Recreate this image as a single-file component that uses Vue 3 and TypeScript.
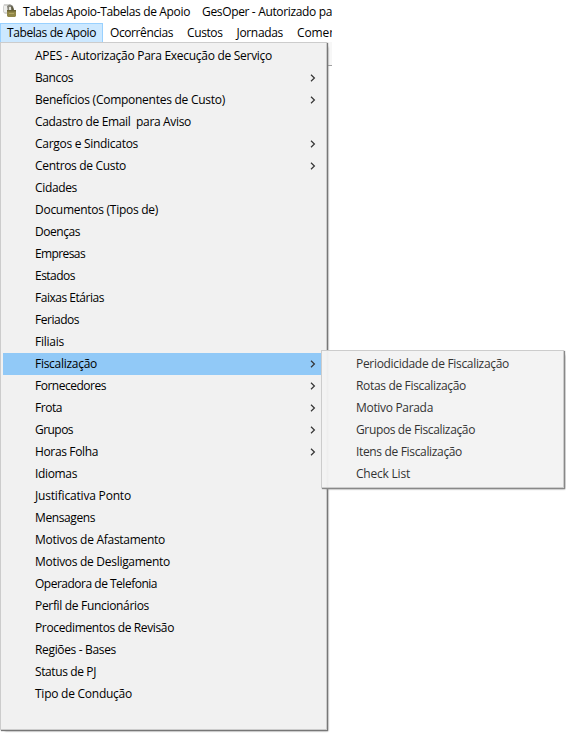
<script setup lang="ts">
import { nextTick, onMounted, ref } from 'vue'

interface Entry {
  label: string
  width: number
  sub?: boolean
  active?: boolean
}

const title: Entry[] = [
  { label: 'Tabelas Apoio-Tabelas de Apoio', width: 167 },
  { label: 'GesOper - Autorizado pa', width: 130 },
]

const bar: Entry[] = [
  { label: 'Tabelas de Apoio', width: 89, active: true },
  { label: 'Ocorrências', width: 63 },
  { label: 'Custos', width: 35.5 },
  { label: 'Jornadas', width: 46.5 },
  { label: 'Comer', width: 37 },
]

const items: Entry[] = [
  { label: 'APES - Autorização Para Execução de Serviço', width: 237 },
  { label: 'Bancos', width: 38, sub: true },
  { label: 'Benefícios (Componentes de Custo)', width: 190, sub: true },
  { label: 'Cadastro de Email  para Aviso', width: 156 },
  { label: 'Cargos e Sindicatos', width: 103, sub: true },
  { label: 'Centros de Custo', width: 91, sub: true },
  { label: 'Cidades', width: 42 },
  { label: 'Documentos (Tipos de)', width: 123 },
  { label: 'Doenças', width: 45 },
  { label: 'Empresas', width: 50 },
  { label: 'Estados', width: 40 },
  { label: 'Faixas Etárias', width: 69 },
  { label: 'Feriados', width: 44 },
  { label: 'Filiais', width: 29 },
  { label: 'Fiscalização', width: 62, sub: true, active: true },
  { label: 'Fornecedores', width: 71, sub: true },
  { label: 'Frota', width: 27, sub: true },
  { label: 'Grupos', width: 38, sub: true },
  { label: 'Horas Folha', width: 63, sub: true },
  { label: 'Idiomas', width: 42 },
  { label: 'Justificativa Ponto', width: 96 },
  { label: 'Mensagens', width: 60 },
  { label: 'Motivos de Afastamento', width: 130 },
  { label: 'Motivos de Desligamento', width: 135 },
  { label: 'Operadora de Telefonia', width: 122 },
  { label: 'Perfil de Funcionários', width: 114 },
  { label: 'Procedimentos de Revisão', width: 139 },
  { label: 'Regiões - Bases', width: 81 },
  { label: 'Status de PJ', width: 61 },
  { label: 'Tipo de Condução', width: 97 },
]

const subItems: Entry[] = [
  { label: 'Periodicidade de Fiscalização', width: 153 },
  { label: 'Rotas de Fiscalização', width: 110 },
  { label: 'Motivo Parada', width: 77 },
  { label: 'Grupos de Fiscalização', width: 119 },
  { label: 'Itens de Fiscalização', width: 106 },
  { label: 'Check List', width: 54 },
]

// Tracking that makes each label fill its nominal width.
const spacing = ref<Record<string, string>>({})
const root = ref<HTMLElement | null>(null)

onMounted(async () => {
  await nextTick()
  const widths = new Map([...title, ...bar, ...items, ...subItems].map((e) => [e.label, e.width]))
  const next: Record<string, string> = {}
  root.value?.querySelectorAll<HTMLElement>('.label').forEach((el) => {
    const text = el.textContent ?? ''
    const wanted = widths.get(text)
    if (wanted) {
      next[text] = `${(wanted - el.getBoundingClientRect().width) / text.length}px`
    }
  })
  spacing.value = next
})
</script>

<template>
  <div ref="root" class="screen">
    <div class="window">
      <header class="titlebar">
        <svg class="app-icon" viewBox="0 0 16 16" width="16" height="16">
          <path d="M1 4 2 1h6l2 2v8H3L1 9z" fill="#d2d2d0" />
          <path d="M2 3h3v6H2z" fill="#eeeeec" />
          <path d="M5 3q3-3 6 0l1 5H6z" fill="#85847a" />
          <path d="M7 4h2v4H7z" fill="#e2e1d6" />
          <path d="M9 3q3 1 3 5h-2z" fill="#5f5b40" />
          <path d="M5 7h9v6l-1 1H6l-1-1z" fill="#918748" />
          <path d="M5 7h9v1.500H5z" fill="#6a6233" />
          <path d="M7 10h5v1H7z" fill="#b2a764" />
        </svg>
        <span v-for="t in title" :key="t.label" class="label" :style="{ letterSpacing: spacing[t.label] }">{{ t.label }}</span>
      </header>
      <nav class="menubar">
        <div v-for="b in bar" :key="b.label" class="tab" :class="{ active: b.active }">
          <span class="label" :style="{ letterSpacing: spacing[b.label] }">{{ b.label }}</span>
        </div>
      </nav>
      <div class="toolbar-edge"></div>
    </div>

    <ul class="menu main">
      <li v-for="i in items" :key="i.label" class="row" :class="{ active: i.active }">
        <span class="label" :style="{ letterSpacing: spacing[i.label] }">{{ i.label }}</span>
        <svg v-if="i.sub" class="chevron" viewBox="0 0 6 8" width="6" height="8">
          <path d="M1 .7 4.400 4 1 7.300" fill="none" stroke="#333" stroke-width="1.2" />
        </svg>
      </li>
    </ul>

    <ul class="menu flyout">
      <li v-for="s in subItems" :key="s.label" class="row">
        <span class="label" :style="{ letterSpacing: spacing[s.label] }">{{ s.label }}</span>
      </li>
    </ul>
  </div>
</template>

<style>
body {
  background: #fff;
}
</style>

<style scoped>
.screen {
  position: relative;
  width: 566px;
  height: 744px;
  overflow: hidden;
  background: #fff;
  color: #000;
  font: 12px/22px 'Open Sans', 'Noto Sans', sans-serif;
}
.label {
  flex: none;
  white-space: pre;
}
.window {
  width: 332px;
  height: 67px;
  overflow: hidden;
}
.titlebar {
  display: flex;
  gap: 12px;
  height: 23px;
  padding: 1px 0 0 2px;
  box-sizing: border-box;
}
.app-icon {
  flex: none;
  margin: 2px -7px 0 0;
}
.menubar {
  display: flex;
  height: 19px;
}
.tab {
  flex: none;
  padding: 0 7px;
  line-height: 20px;
}
.tab.active {
  height: 19px;
  padding: 0 6px;
  box-sizing: border-box;
  border: 1px solid #99d1ff;
  border-bottom: 0;
  background: #cce8ff;
  line-height: 18px;
}
.toolbar-edge {
  height: 24px;
  box-sizing: border-box;
  border-bottom: 1px solid #a0a0a0;
  background: #f7f7f7;
}
.menu {
  position: absolute;
  margin: 0;
  padding: 2px;
  box-sizing: border-box;
  border: 1px solid #ccc;
  list-style: none;
}
.main {
  top: 42px;
  left: 0;
  width: 327px;
  height: 688px;
  padding-right: 4px;
  background: #f1f1f1;
  box-shadow: 1px 1px 1px #777, 3px 3px 2px -2px #999;
}
.flyout {
  top: 350px;
  left: 321px;
  width: 243px;
  height: 138px;
  background: rgba(243, 243, 243, 0.96);
  color: #333;
  box-shadow: 1px 1px 1px #888, 3px 3px 2px -2px #999;
}
.row {
  display: flex;
  align-items: center;
  justify-content: space-between;
  height: 22px;
  padding: 0 6px 0 32px;
}
.row.active {
  background: #91c9f7;
}
</style>
